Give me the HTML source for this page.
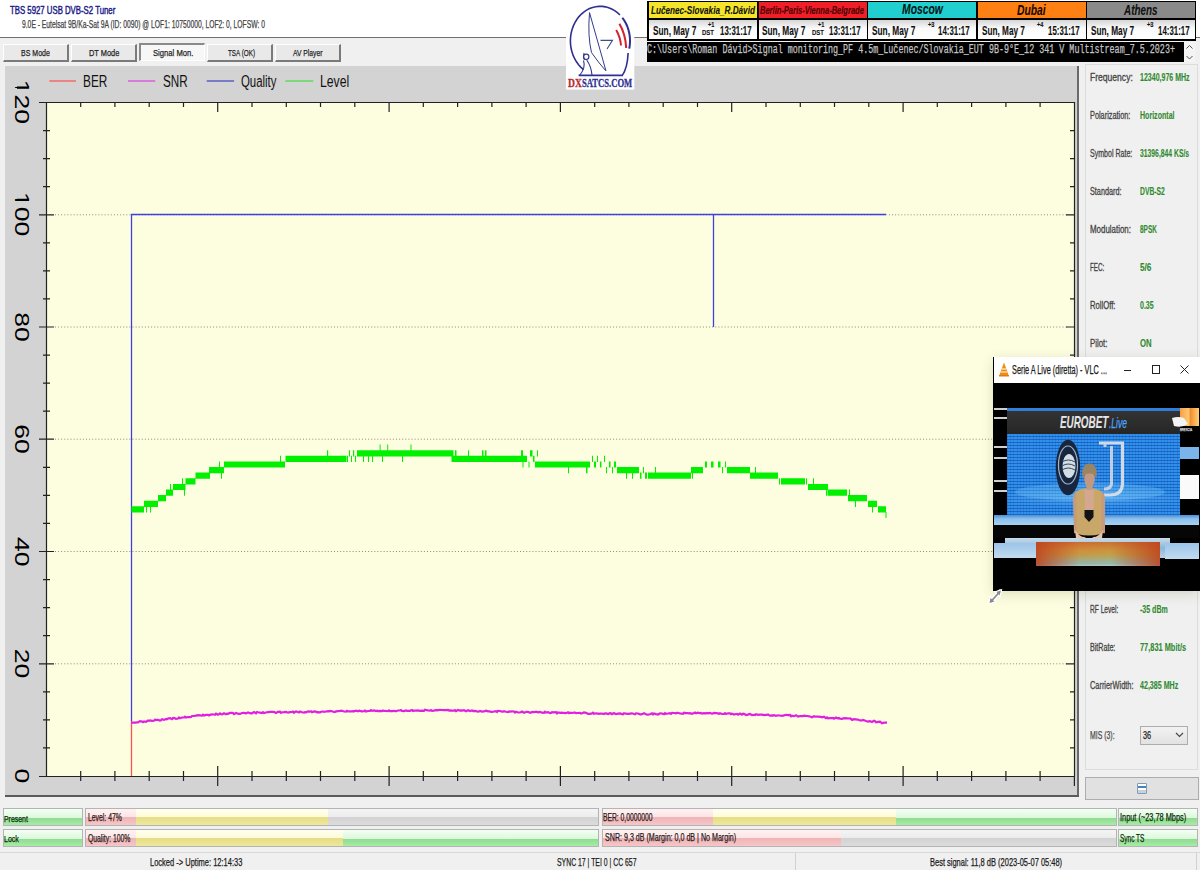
<!DOCTYPE html><html><head><meta charset="utf-8"><style>
*{margin:0;padding:0;box-sizing:border-box}
html,body{width:1200px;height:870px;overflow:hidden;background:#f0f0f0;font-family:"Liberation Sans",sans-serif}
body{position:relative}
.a{position:absolute}
.t{position:absolute;white-space:nowrap;transform-origin:0 0}
</style></head><body>
<div class="a" style="left:0px;top:0px;width:1200px;height:37px;background:#fff;"></div>
<div class="a" style="left:0px;top:37px;width:1200px;height:1px;background:#707070;"></div>
<div class="t" style="left:10.34px;top:4.72px;font-size:10.72px;line-height:10.72px;color:#1c1c86;font-family:'Liberation Sans',sans-serif;transform:scaleX(0.7268);-webkit-text-stroke:0.45px #1c1c86;">TBS 5927 USB DVB-S2 Tuner</div>
<div class="t" style="left:22.36px;top:20.23px;font-size:10.00px;line-height:10.00px;color:#454545;font-family:'Liberation Sans',sans-serif;transform:scaleX(0.6744);-webkit-text-stroke:0.25px #454545;">9.0E - Eutelsat 9B/Ka-Sat 9A (ID: 0090) @ LOF1: 10750000, LOF2: 0, LOFSW: 0</div>
<div class="a" style="left:3px;top:44px;width:66px;height:18px;background:#e9e9e9;border-top:1px solid #fff;border-left:1px solid #fff;border-right:2px solid #7a7a7a;border-bottom:2px solid #7a7a7a"></div>
<div class="t" style="left:21.44px;top:47.98px;font-size:9.71px;line-height:9.71px;color:#1e1e1e;font-family:'Liberation Sans',sans-serif;transform:scaleX(0.7227);-webkit-text-stroke:0.25px #1e1e1e;">BS Mode</div>
<div class="a" style="left:71px;top:44px;width:66px;height:18px;background:#e9e9e9;border-top:1px solid #fff;border-left:1px solid #fff;border-right:2px solid #7a7a7a;border-bottom:2px solid #7a7a7a"></div>
<div class="t" style="left:88.71px;top:47.98px;font-size:9.71px;line-height:9.71px;color:#1e1e1e;font-family:'Liberation Sans',sans-serif;transform:scaleX(0.7627);-webkit-text-stroke:0.25px #1e1e1e;">DT Mode</div>
<div class="a" style="left:139px;top:43px;width:66px;height:18px;background:#f7f7f7;border-top:2px solid #8a8a8a;border-left:2px solid #8a8a8a;border-right:1px solid #fff;border-bottom:1px solid #fff"></div>
<div class="t" style="left:152.62px;top:47.98px;font-size:9.71px;line-height:9.71px;color:#1e1e1e;font-family:'Liberation Sans',sans-serif;transform:scaleX(0.7894);-webkit-text-stroke:0.25px #1e1e1e;">Signal Mon.</div>
<div class="a" style="left:207px;top:44px;width:66px;height:18px;background:#e9e9e9;border-top:1px solid #fff;border-left:1px solid #fff;border-right:2px solid #7a7a7a;border-bottom:2px solid #7a7a7a"></div>
<div class="t" style="left:228.07px;top:47.98px;font-size:9.71px;line-height:9.71px;color:#1e1e1e;font-family:'Liberation Sans',sans-serif;transform:scaleX(0.6522);-webkit-text-stroke:0.25px #1e1e1e;">TSA (OK)</div>
<div class="a" style="left:275px;top:44px;width:66px;height:18px;background:#e9e9e9;border-top:1px solid #fff;border-left:1px solid #fff;border-right:2px solid #7a7a7a;border-bottom:2px solid #7a7a7a"></div>
<div class="t" style="left:293.30px;top:47.98px;font-size:9.71px;line-height:9.71px;color:#1e1e1e;font-family:'Liberation Sans',sans-serif;transform:scaleX(0.6944);-webkit-text-stroke:0.25px #1e1e1e;">AV Player</div>
<div class="a" style="left:5px;top:66px;width:1072px;height:731px;background:#d3d3d3;"></div>
<div class="a" style="left:1077px;top:66px;width:2px;height:731px;background:#6a6a6a;"></div>
<div class="a" style="left:5px;top:795px;width:1074px;height:2px;background:#5a5a5a;"></div>
<div class="a" style="left:46px;top:102px;width:1029px;height:674px;background:#fdfee0;"></div>
<svg class="a" style="left:0;top:0" width="1200" height="870" viewBox="0 0 1200 870"><line x1="55" y1="663.8" x2="1067" y2="663.8" stroke="#8c8c78" stroke-width="1" stroke-dasharray="1 2.1"/><line x1="55" y1="551.5" x2="1067" y2="551.5" stroke="#8c8c78" stroke-width="1" stroke-dasharray="1 2.1"/><line x1="55" y1="439.2" x2="1067" y2="439.2" stroke="#8c8c78" stroke-width="1" stroke-dasharray="1 2.1"/><line x1="55" y1="327.0" x2="1067" y2="327.0" stroke="#8c8c78" stroke-width="1" stroke-dasharray="1 2.1"/><line x1="55" y1="214.8" x2="1067" y2="214.8" stroke="#8c8c78" stroke-width="1" stroke-dasharray="1 2.1"/><path d="M46.5 102V776.5M39 102.5H1075M39 776.5H1075M1074.5 102V776.5" stroke="#222" stroke-width="1.2" fill="none"/><path d="M43 747.9H50M1070 747.9H1074.5M43 719.9H50M1070 719.9H1074.5M43 691.8H50M1070 691.8H1074.5M39 663.8H54M1066 663.8H1074.5M43 635.7H50M1070 635.7H1074.5M43 607.6H50M1070 607.6H1074.5M43 579.6H50M1070 579.6H1074.5M39 551.5H54M1066 551.5H1074.5M43 523.4H50M1070 523.4H1074.5M43 495.4H50M1070 495.4H1074.5M43 467.3H50M1070 467.3H1074.5M39 439.2H54M1066 439.2H1074.5M43 411.2H50M1070 411.2H1074.5M43 383.1H50M1070 383.1H1074.5M43 355.1H50M1070 355.1H1074.5M39 327.0H54M1066 327.0H1074.5M43 298.9H50M1070 298.9H1074.5M43 270.9H50M1070 270.9H1074.5M43 242.8H50M1070 242.8H1074.5M39 214.8H54M1066 214.8H1074.5M43 186.7H50M1070 186.7H1074.5M43 158.6H50M1070 158.6H1074.5M43 130.6H50M1070 130.6H1074.5M80.7 771V781M80.7 102V107M114.9 771V781M114.9 102V107M149.2 771V781M149.2 102V107M183.5 771V781M183.5 102V107M217.7 766V786M217.7 102V112M252.0 771V781M252.0 102V107M286.3 771V781M286.3 102V107M320.5 771V781M320.5 102V107M354.8 771V781M354.8 102V107M389.1 766V786M389.1 102V112M423.3 771V781M423.3 102V107M457.6 771V781M457.6 102V107M491.9 771V781M491.9 102V107M526.1 771V781M526.1 102V107M560.4 766V786M560.4 102V112M594.7 771V781M594.7 102V107M628.9 771V781M628.9 102V107M663.2 771V781M663.2 102V107M697.5 771V781M697.5 102V107M731.7 766V786M731.7 102V112M766.0 771V781M766.0 102V107M800.3 771V781M800.3 102V107M834.5 771V781M834.5 102V107M868.8 771V781M868.8 102V107M903.1 766V786M903.1 102V112M937.3 771V781M937.3 102V107M971.6 771V781M971.6 102V107M1005.9 771V781M1005.9 102V107M1040.1 771V781M1040.1 102V107M1074.4 776V786" stroke="#222" stroke-width="1.2" fill="none"/><path d="M131.5 776V720.5" stroke="#ff5050" stroke-width="1.3"/><path d="M131.5 721V214.5H886M713.5 214.5V327" stroke="#4040e0" stroke-width="1.3" fill="none"/><path d="M131 722.7 L132 722.7 L134 722.7 L136 722.7 L137 722.3 L138 722.4 L140 721.1 L142 721.5 L143 722.1 L144 721.5 L146 721.8 L148 720.5 L149 720.9 L150 720.5 L152 720.8 L154 720.7 L155 719.7 L156 719.9 L158 719.9 L160 720.6 L161 720.3 L162 719.2 L164 719.9 L166 718.9 L167 719.3 L168 718.5 L170 718.1 L172 719.2 L173 718.1 L174 717.9 L176 718.8 L178 718.5 L179 717.5 L180 718.3 L182 717.5 L184 717.5 L185 716.7 L186 717.5 L188 717.0 L190 717.2 L191 717.0 L192 716.0 L194 716.0 L196 715.6 L197 715.4 L198 715.2 L200 715.4 L202 715.7 L203 714.7 L204 715.5 L206 714.9 L208 714.8 L209 715.4 L210 714.8 L212 714.4 L214 714.5 L215 714.7 L216 713.7 L218 714.8 L220 713.4 L221 714.3 L222 714.4 L224 713.2 L226 714.2 L227 713.6 L228 713.8 L230 712.9 L232 712.9 L233 713.1 L234 714.1 L236 713.0 L238 713.7 L239 713.9 L240 713.9 L242 713.0 L244 712.9 L245 713.1 L246 713.4 L248 712.4 L250 713.2 L251 713.3 L252 713.3 L254 712.1 L256 713.3 L257 712.0 L258 712.3 L260 712.7 L262 713.1 L263 712.2 L264 713.0 L266 712.5 L268 712.1 L269 712.1 L270 711.9 L272 711.8 L274 711.8 L275 712.6 L276 713.0 L278 711.8 L280 711.6 L281 712.9 L282 712.3 L284 712.1 L286 711.8 L287 712.3 L288 712.6 L290 712.1 L292 712.0 L293 711.5 L294 712.7 L296 711.4 L298 712.0 L299 712.5 L300 711.5 L302 712.3 L304 712.6 L305 712.1 L306 712.3 L308 711.3 L310 711.7 L311 711.3 L312 712.2 L314 711.4 L316 711.6 L317 712.4 L318 712.1 L320 712.3 L322 711.5 L323 711.5 L324 711.8 L326 711.5 L328 711.2 L329 711.3 L330 710.9 L332 711.2 L334 712.0 L335 711.9 L336 711.4 L338 711.2 L340 711.0 L341 710.6 L342 710.8 L344 711.5 L346 711.6 L347 710.9 L348 711.4 L350 711.4 L352 711.3 L353 711.2 L354 711.3 L356 710.7 L358 711.2 L359 710.6 L360 710.9 L362 711.3 L364 711.1 L365 710.6 L366 711.5 L368 711.0 L370 710.9 L371 710.1 L372 710.8 L374 710.4 L376 711.0 L377 710.7 L378 711.2 L380 710.9 L382 711.1 L383 710.5 L384 710.9 L386 711.0 L388 711.1 L389 710.4 L390 711.1 L392 711.1 L394 710.8 L395 711.2 L396 711.2 L398 710.5 L400 710.5 L401 710.0 L402 711.0 L404 711.1 L406 710.5 L407 710.8 L408 710.8 L410 710.8 L412 710.0 L413 710.9 L414 710.6 L416 710.7 L418 710.4 L419 710.7 L420 710.9 L422 710.7 L424 710.8 L425 709.8 L426 710.0 L428 710.4 L430 710.7 L431 710.1 L432 710.8 L434 710.7 L436 709.9 L437 710.5 L438 710.1 L440 709.9 L442 710.0 L443 710.2 L444 710.1 L446 710.1 L448 709.8 L449 710.5 L450 710.3 L452 710.7 L454 710.7 L455 710.2 L456 711.2 L458 710.0 L460 710.6 L461 710.4 L462 710.6 L464 710.2 L466 711.3 L467 710.7 L468 710.2 L470 711.1 L472 710.4 L473 711.0 L474 710.8 L476 711.1 L478 711.7 L479 711.5 L480 711.0 L482 711.6 L484 711.4 L485 711.0 L486 710.7 L488 711.4 L490 711.4 L491 712.0 L492 712.0 L494 711.5 L496 711.2 L497 712.0 L498 710.8 L500 711.0 L502 711.6 L503 711.7 L504 711.1 L506 711.8 L508 712.2 L509 711.5 L510 711.6 L512 711.4 L514 711.5 L515 712.5 L516 711.7 L518 712.5 L520 712.5 L521 712.1 L522 711.6 L524 712.7 L526 712.0 L527 711.9 L528 711.8 L530 712.8 L532 712.1 L533 711.9 L534 712.2 L536 711.7 L538 712.4 L539 712.2 L540 712.0 L542 712.7 L544 712.8 L545 711.7 L546 712.5 L548 712.1 L550 713.1 L551 712.9 L552 712.2 L554 712.3 L556 712.1 L557 713.3 L558 712.4 L560 712.9 L562 712.7 L563 713.0 L564 712.9 L566 713.2 L568 712.3 L569 713.2 L570 712.6 L572 713.0 L574 712.7 L575 712.7 L576 713.1 L578 713.0 L580 712.9 L581 713.5 L582 713.3 L584 712.5 L586 712.9 L587 713.2 L588 713.9 L590 713.8 L592 713.4 L593 712.7 L594 713.8 L596 713.3 L598 713.6 L599 713.8 L600 713.7 L602 713.5 L604 714.1 L605 713.4 L606 713.4 L608 714.1 L610 713.2 L611 713.3 L612 714.1 L614 713.0 L616 714.1 L617 713.9 L618 713.6 L620 713.4 L622 714.1 L623 714.3 L624 713.2 L626 713.7 L628 713.8 L629 713.8 L630 713.6 L632 713.3 L634 714.0 L635 714.3 L636 713.3 L638 713.5 L640 714.3 L641 714.3 L642 714.2 L644 713.3 L646 714.3 L647 714.6 L648 714.7 L650 714.3 L652 713.3 L653 714.4 L654 713.5 L656 714.1 L658 714.5 L659 714.1 L660 713.3 L662 713.5 L664 714.3 L665 713.2 L666 713.8 L668 713.5 L670 713.1 L671 713.8 L672 712.9 L674 713.0 L676 713.3 L677 712.9 L678 712.8 L680 713.5 L682 713.7 L683 713.9 L684 712.8 L686 713.2 L688 713.0 L689 713.4 L690 713.2 L692 713.8 L694 713.0 L695 712.5 L696 713.3 L698 712.6 L700 713.2 L701 713.0 L702 713.6 L704 713.2 L706 713.3 L707 712.9 L708 713.3 L710 713.0 L712 713.7 L713 713.4 L714 712.9 L716 713.1 L718 713.3 L719 713.9 L720 713.2 L722 714.0 L724 713.9 L725 713.2 L726 714.0 L728 713.3 L730 713.4 L731 714.1 L732 713.6 L734 714.5 L736 714.0 L737 713.9 L738 714.6 L740 713.5 L742 714.6 L743 713.7 L744 713.8 L746 715.0 L748 714.7 L749 714.1 L750 714.0 L752 715.2 L754 714.8 L755 715.1 L756 714.2 L758 714.9 L760 714.6 L761 714.5 L762 714.6 L764 715.1 L766 714.8 L767 714.9 L768 714.5 L770 715.6 L772 715.4 L773 715.6 L774 715.1 L776 715.8 L778 715.3 L779 715.5 L780 715.5 L782 715.8 L784 715.4 L785 715.0 L786 714.9 L788 715.2 L790 715.0 L791 716.3 L792 715.7 L794 716.2 L796 715.2 L797 715.9 L798 716.5 L800 716.2 L802 716.0 L803 716.1 L804 715.7 L806 715.9 L808 716.0 L809 716.4 L810 716.5 L812 717.3 L814 716.3 L815 716.6 L816 716.7 L818 716.6 L820 716.9 L821 716.9 L822 717.3 L824 716.8 L826 718.1 L827 717.4 L828 718.3 L830 718.1 L832 718.1 L833 717.9 L834 718.7 L836 717.6 L838 718.5 L839 718.0 L840 718.7 L842 718.8 L844 718.1 L845 718.3 L846 718.1 L848 718.5 L850 718.4 L851 719.0 L852 719.9 L854 719.2 L856 719.3 L857 719.7 L858 719.6 L860 720.4 L862 720.5 L863 719.9 L864 720.2 L866 721.0 L868 721.5 L869 721.3 L870 721.1 L872 722.0 L874 720.8 L875 721.1 L876 722.3 L878 721.9 L880 721.6 L881 722.4 L882 723.2 L884 722.7 L886 722.6 L887 722.4" stroke="#e020e0" stroke-width="2.2" fill="none"/><path d="M131.5 506.3H144.0V512.5H131.5z M144.0 500.7H158.0V506.9H144.0z M158.0 495.1H166.0V501.3H158.0z M166.0 489.5H173.0V495.7H166.0z M173.0 483.9H185.5V490.1H173.0z M185.5 478.2H195.5V484.5H185.5z M195.5 472.6H210.0V478.8H195.5z M210.0 467.0H224.0V473.2H210.0z M224.0 461.4H285.0V467.6H224.0z M285.5 455.8H346.5V462.0H285.5z M358.0 450.2H451.5V456.4H358.0z M451.5 455.8H527.0V462.0H451.5z M535.0 461.4H590.0V467.6H535.0z M617.0 467.0H638.0V473.2H617.0z M648.0 472.6H691.0V478.8H648.0z M691.0 467.0H703.0V473.2H691.0z M727.0 467.0H750.0V473.2H727.0z M750.0 472.6H778.0V478.8H750.0z M782.0 478.2H805.0V484.5H782.0z M809.0 483.9H828.0V490.1H809.0z M828.0 489.5H847.0V495.7H828.0z M848.0 495.1H866.0V501.3H848.0z M868.0 500.7H877.0V506.9H868.0z M878.0 506.3H886.0V512.5H878.0z M144.5 500.7h1V506.9h-1z M146.0 506.3h1V512.5h-1z M150.0 506.3h1V512.5h-1z M155.5 500.7h1.5V506.9h-1.5z M170.0 483.9h1V490.1h-1z M182.0 478.2h1V484.5h-1z M184.0 489.5h1V495.7h-1z M203.0 472.6h1V478.8h-1z M209.0 467.0h1V473.2h-1z M219.0 461.4h1V467.6h-1z M221.0 472.6h1V478.8h-1z M231.0 461.4h1V467.6h-1z M280.0 455.8h1V462.0h-1z M283.0 461.4h2V467.6h-2z M327.0 450.2h1.2V456.4h-1.2z M347.0 455.8h1V462.0h-1z M349.0 450.2h1V456.4h-1z M351.0 455.8h1V462.0h-1z M353.0 450.2h1.2V456.4h-1.2z M355.0 455.8h1V462.0h-1z M357.0 450.2h1V456.4h-1z M363.0 455.8h1V462.0h-1z M366.0 450.2h1V456.4h-1z M368.0 455.8h1V462.0h-1z M372.0 455.8h1V462.0h-1z M374.0 450.2h1V456.4h-1z M379.6 444.6h1V450.8h-1z M382.0 455.8h1V462.0h-1z M387.2 444.6h1V450.8h-1z M402.0 455.8h1V462.0h-1z M410.5 444.6h1V450.8h-1z M451.5 450.2h2V456.4h-2z M455.0 450.2h1.5V456.4h-1.5z M468.0 450.2h1V456.4h-1z M482.0 450.2h1.5V456.4h-1.5z M485.0 450.2h1.5V456.4h-1.5z M522.5 461.4h1V467.6h-1z M528.5 461.4h1V467.6h-1z M521.0 450.2h2V456.4h-2z M524.0 455.8h1V462.0h-1z M530.0 450.2h2.5V456.4h-2.5z M533.0 455.8h1.5V462.0h-1.5z M537.0 450.2h1V456.4h-1z M568.0 467.0h1V473.2h-1z M586.0 467.0h1.5V473.2h-1.5z M589.0 461.4h1V467.6h-1z M592.0 455.8h1V462.0h-1z M594.0 461.4h2V467.6h-2z M597.0 455.8h1V462.0h-1z M600.0 461.4h1.5V467.6h-1.5z M604.0 455.8h1V462.0h-1z M606.0 467.0h1V473.2h-1z M609.0 461.4h1.5V467.6h-1.5z M612.0 467.0h1V473.2h-1z M614.0 461.4h2V467.6h-2z M619.0 467.0h1V473.2h-1z M626.0 472.6h1V478.8h-1z M632.0 472.6h1V478.8h-1z M638.0 467.0h1V473.2h-1z M640.0 472.6h1.5V478.8h-1.5z M643.0 467.0h1V473.2h-1z M645.0 472.6h2V478.8h-2z M655.0 467.0h1V473.2h-1z M661.0 472.6h1V478.8h-1z M687.0 472.6h1V478.8h-1z M692.0 472.6h1V478.8h-1z M697.0 467.0h1V473.2h-1z M705.0 461.4h2V467.6h-2z M711.0 461.4h2.5V467.6h-2.5z M718.0 461.4h2.5V467.6h-2.5z M725.0 461.4h1V467.6h-1z M727.0 467.0h1V473.2h-1z M722.0 467.0h1V473.2h-1z M755.0 467.0h1V473.2h-1z M779.0 478.2h1V484.5h-1z M781.0 478.2h1V484.5h-1z M806.0 478.2h1V484.5h-1z M808.0 483.9h1V490.1h-1z M813.0 478.2h1V484.5h-1z M826.0 489.5h1.5V495.7h-1.5z M841.0 489.5h1V495.7h-1z M849.0 489.5h1V495.7h-1z M855.0 500.7h1V506.9h-1z M866.0 495.1h1V501.3h-1z M872.0 506.3h1V512.5h-1z M881.0 506.3h1V512.5h-1z M885.5 511.9h1V518.1h-1z" fill="#00f000"/><line x1="49.3" y1="81" x2="76" y2="81" stroke="#ff5050" stroke-width="1.2"/><line x1="128" y1="81" x2="155.2" y2="81" stroke="#e040e0" stroke-width="1.2"/><line x1="206.7" y1="81" x2="234.1" y2="81" stroke="#4040c0" stroke-width="1.2"/><line x1="285.3" y1="81" x2="313.3" y2="81" stroke="#40e040" stroke-width="1.2"/></svg>
<div class="t" style="left:83.05px;top:73.71px;font-size:15.94px;line-height:15.94px;color:#111;font-family:'Liberation Sans',sans-serif;transform:scaleX(0.7416);">BER</div>
<div class="t" style="left:162.62px;top:73.71px;font-size:15.94px;line-height:15.94px;color:#111;font-family:'Liberation Sans',sans-serif;transform:scaleX(0.7334);">SNR</div>
<div class="t" style="left:241.33px;top:73.71px;font-size:15.94px;line-height:15.94px;color:#111;font-family:'Liberation Sans',sans-serif;transform:scaleX(0.7154);">Quality</div>
<div class="t" style="left:320.32px;top:73.71px;font-size:15.94px;line-height:15.94px;color:#111;font-family:'Liberation Sans',sans-serif;transform:scaleX(0.7667);">Level</div>
<div class="t" style="left:0;top:0;font-size:26.5px;line-height:26.5px;color:#000;transform:translate(31.31px,768.58px) rotate(90deg) scaleY(0.7492)">0</div>
<div class="t" style="left:0;top:0;font-size:26.5px;line-height:26.5px;color:#000;transform:translate(31.31px,648.78px) rotate(90deg) scaleY(0.7492)">20</div>
<div class="t" style="left:0;top:0;font-size:26.5px;line-height:26.5px;color:#000;transform:translate(31.31px,536.93px) rotate(90deg) scaleY(0.7492)">40</div>
<div class="t" style="left:0;top:0;font-size:26.5px;line-height:26.5px;color:#000;transform:translate(31.31px,424.28px) rotate(90deg) scaleY(0.7492)">60</div>
<div class="t" style="left:0;top:0;font-size:26.5px;line-height:26.5px;color:#000;transform:translate(31.31px,312.16px) rotate(90deg) scaleY(0.7492)">80</div>
<div class="t" style="left:0;top:0;font-size:26.5px;line-height:26.5px;color:#000;transform:translate(31.31px,192.09px) rotate(90deg) scaleY(0.7492)">100</div>
<div class="t" style="left:0;top:0;font-size:26.5px;line-height:26.5px;color:#000;transform:translate(31.31px,79.84px) rotate(90deg) scaleY(0.7492)">120</div>
<div class="a" style="left:14px;top:192.75px;width:3px;height:6.1px;background:#d3d3d3;"></div>
<div class="a" style="left:14px;top:200.65px;width:3px;height:6.1px;background:#d3d3d3;"></div>
<div class="a" style="left:14px;top:80.5px;width:3px;height:6.1px;background:#d3d3d3;"></div>
<div class="a" style="left:14px;top:88.4px;width:3px;height:6.1px;background:#d3d3d3;"></div>
<div class="a" style="left:1085px;top:64px;width:113px;height:706px;border:1px solid #dcdcdc;background:#f0f0f0"></div>
<div class="t" style="left:1090.11px;top:72.71px;font-size:10.14px;line-height:10.14px;color:#444;font-family:'Liberation Sans',sans-serif;transform:scaleX(0.8449);-webkit-text-stroke:0.3px #444;">Frequency:</div>
<div class="t" style="left:1139.98px;top:72.71px;font-size:10.14px;line-height:10.14px;color:#2f8a2f;font-family:'Liberation Sans',sans-serif;font-weight:bold;transform:scaleX(0.6940);-webkit-text-stroke:0.1px #2f8a2f;">12340,976 MHz</div>
<div class="t" style="left:1090.21px;top:110.71px;font-size:10.14px;line-height:10.14px;color:#444;font-family:'Liberation Sans',sans-serif;transform:scaleX(0.7250);-webkit-text-stroke:0.3px #444;">Polarization:</div>
<div class="t" style="left:1139.90px;top:110.71px;font-size:10.14px;line-height:10.14px;color:#2f8a2f;font-family:'Liberation Sans',sans-serif;font-weight:bold;transform:scaleX(0.6973);-webkit-text-stroke:0.1px #2f8a2f;">Horizontal</div>
<div class="t" style="left:1090.45px;top:148.71px;font-size:10.14px;line-height:10.14px;color:#444;font-family:'Liberation Sans',sans-serif;transform:scaleX(0.6964);-webkit-text-stroke:0.3px #444;">Symbol Rate:</div>
<div class="t" style="left:1140.26px;top:148.71px;font-size:10.14px;line-height:10.14px;color:#2f8a2f;font-family:'Liberation Sans',sans-serif;font-weight:bold;transform:scaleX(0.6709);-webkit-text-stroke:0.1px #2f8a2f;">31396,844 KS/s</div>
<div class="t" style="left:1090.44px;top:186.71px;font-size:10.14px;line-height:10.14px;color:#444;font-family:'Liberation Sans',sans-serif;transform:scaleX(0.7158);-webkit-text-stroke:0.3px #444;">Standard:</div>
<div class="t" style="left:1139.93px;top:186.71px;font-size:10.14px;line-height:10.14px;color:#2f8a2f;font-family:'Liberation Sans',sans-serif;font-weight:bold;transform:scaleX(0.6673);-webkit-text-stroke:0.1px #2f8a2f;">DVB-S2</div>
<div class="t" style="left:1090.16px;top:224.71px;font-size:10.14px;line-height:10.14px;color:#444;font-family:'Liberation Sans',sans-serif;transform:scaleX(0.7827);-webkit-text-stroke:0.3px #444;">Modulation:</div>
<div class="t" style="left:1140.21px;top:224.71px;font-size:10.14px;line-height:10.14px;color:#2f8a2f;font-family:'Liberation Sans',sans-serif;font-weight:bold;transform:scaleX(0.6367);-webkit-text-stroke:0.1px #2f8a2f;">8PSK</div>
<div class="t" style="left:1090.30px;top:262.71px;font-size:10.14px;line-height:10.14px;color:#444;font-family:'Liberation Sans',sans-serif;transform:scaleX(0.6213);-webkit-text-stroke:0.3px #444;">FEC:</div>
<div class="t" style="left:1140.15px;top:262.71px;font-size:10.14px;line-height:10.14px;color:#2f8a2f;font-family:'Liberation Sans',sans-serif;font-weight:bold;transform:scaleX(0.8140);-webkit-text-stroke:0.1px #2f8a2f;">5/6</div>
<div class="t" style="left:1090.19px;top:300.71px;font-size:10.14px;line-height:10.14px;color:#444;font-family:'Liberation Sans',sans-serif;transform:scaleX(0.7573);-webkit-text-stroke:0.3px #444;">RollOff:</div>
<div class="t" style="left:1140.12px;top:300.71px;font-size:10.14px;line-height:10.14px;color:#2f8a2f;font-family:'Liberation Sans',sans-serif;font-weight:bold;transform:scaleX(0.6921);-webkit-text-stroke:0.1px #2f8a2f;">0.35</div>
<div class="t" style="left:1090.17px;top:338.71px;font-size:10.14px;line-height:10.14px;color:#444;font-family:'Liberation Sans',sans-serif;transform:scaleX(0.7704);-webkit-text-stroke:0.3px #444;">Pilot:</div>
<div class="t" style="left:1140.09px;top:338.71px;font-size:10.14px;line-height:10.14px;color:#2f8a2f;font-family:'Liberation Sans',sans-serif;font-weight:bold;transform:scaleX(0.7674);-webkit-text-stroke:0.1px #2f8a2f;">ON</div>
<div class="t" style="left:1090.27px;top:604.71px;font-size:10.14px;line-height:10.14px;color:#444;font-family:'Liberation Sans',sans-serif;transform:scaleX(0.6547);-webkit-text-stroke:0.3px #444;">RF Level:</div>
<div class="t" style="left:1140.12px;top:604.71px;font-size:10.14px;line-height:10.14px;color:#2f8a2f;font-family:'Liberation Sans',sans-serif;font-weight:bold;transform:scaleX(0.6938);-webkit-text-stroke:0.1px #2f8a2f;">-35 dBm</div>
<div class="t" style="left:1090.23px;top:642.71px;font-size:10.14px;line-height:10.14px;color:#444;font-family:'Liberation Sans',sans-serif;transform:scaleX(0.7037);-webkit-text-stroke:0.3px #444;">BitRate:</div>
<div class="t" style="left:1140.10px;top:642.71px;font-size:10.14px;line-height:10.14px;color:#2f8a2f;font-family:'Liberation Sans',sans-serif;font-weight:bold;transform:scaleX(0.7309);-webkit-text-stroke:0.1px #2f8a2f;">77,831 Mbit/s</div>
<div class="t" style="left:1090.43px;top:680.71px;font-size:10.14px;line-height:10.14px;color:#444;font-family:'Liberation Sans',sans-serif;transform:scaleX(0.7286);-webkit-text-stroke:0.3px #444;">CarrierWidth:</div>
<div class="t" style="left:1140.33px;top:680.71px;font-size:10.14px;line-height:10.14px;color:#2f8a2f;font-family:'Liberation Sans',sans-serif;font-weight:bold;transform:scaleX(0.7014);-webkit-text-stroke:0.1px #2f8a2f;">42,385 MHz</div>
<div class="t" style="left:1090.25px;top:730.91px;font-size:10.14px;line-height:10.14px;color:#4a4a4a;font-family:'Liberation Sans',sans-serif;transform:scaleX(0.6833);-webkit-text-stroke:0.25px #4a4a4a;">MIS (3):</div>
<div class="a" style="left:1140px;top:726px;width:48px;height:19px;border:1px solid #adadad;background:linear-gradient(#f2f2f2,#e2e2e2)"></div>
<div class="t" style="left:1143.21px;top:730.71px;font-size:10.14px;line-height:10.14px;color:#222;font-family:'Liberation Sans',sans-serif;transform:scaleX(0.7178);-webkit-text-stroke:0.25px #222;">36</div>
<svg class="a" style="left:1175px;top:732px" width="9" height="6"><path d="M1 1L4.5 4.5L8 1" stroke="#444" stroke-width="1.1" fill="none"/></svg>
<div class="a" style="left:1085px;top:777px;width:114px;height:23px;border:1px solid #adadad;background:#e1e1e1"></div>
<div class="a" style="left:1137px;top:783px;width:10px;height:11px;border:1px solid #8a9ab0;background:linear-gradient(#fff 0,#fff 25%,#3f86c8 25%,#3f86c8 45%,#fff 45%,#fff 65%,#c8d0dc 65%);border-radius:1px"></div>
<svg class="a" style="left:560px;top:0" width="85" height="95" viewBox="0 0 85 95">
<rect x="6" y="37" width="68.3" height="52.6" fill="#fff"/>
<g stroke="#2e3192" fill="none" stroke-width="1.6">
<path d="M23.54 69.58 L20.95 67.31 L18.58 64.72 L16.48 61.84 L14.66 58.72 L13.14 55.39 L11.94 51.88 L11.08 48.24 L10.56 44.52 L10.40 40.75 L10.59 36.98 L11.13 33.26 L12.02 29.64 L13.25 26.14 L14.79 22.82 L16.64 19.72 L18.76 16.86 L21.14 14.30 L23.75 12.05 L26.56 10.14 L29.52 8.60 L32.61 7.44 L35.80 6.68 L39.03 6.33 L42.28 6.38 L45.50 6.85 L48.66 7.72 L51.72 8.99 L54.65 10.64 L57.40 12.64 L59.95 14.99"/><path d="M62.35 17.75 L62.97 18.58 L63.58 19.44 L64.15 20.32 L64.71 21.22 L65.24 22.14 L65.74 23.08 L66.22 24.04 L66.67 25.01 L67.10 26.00 L67.49 27.01 L67.86 28.03 L68.20 29.07 L68.51 30.11 L68.80 31.17 L69.05 32.24 L69.27 33.31 L69.47 34.40 L69.63 35.49 L69.77 36.58 L69.87 37.68 L69.94 38.79 L69.99 39.89 L70.00 41.00 L69.98 42.11 L69.93 43.21 L69.85 44.32 L69.75 45.42 L69.61 46.51 L69.44 47.60 L69.24 48.68" stroke-width="2"/><path d="M68.11 53.02 Q67.5 68 62.3 75.4 H18.6"/>
</g>
<path d="M56.2 30 Q60.5 37.5 61 45.5" stroke="#d2232a" stroke-width="2" fill="none"/>
<path d="M59.4 23.8 Q65.5 34 66.2 48" stroke="#d2232a" stroke-width="2" fill="none"/>
<path d="M29.5 12.6 L46 71 M29.5 12.6 Q27.5 36 31.5 52.5 Q38 62 45.5 70.5" stroke="#343a8c" stroke-width="1" fill="none"/>
<path d="M40.5 40.4 L52.5 40.2 L47 49" stroke="#3b4d8e" stroke-width="1.1" fill="none"/>
<circle cx="26.2" cy="56.8" r="2.7" stroke="#343a8c" stroke-width="1.2" fill="none"/>
<path d="M23.5 60.5 Q26 68 19.5 75.4 M26.8 60 Q31.5 67 32 75.4 M24 53 Q23 57 24.5 60" stroke="#343a8c" stroke-width="1.1" fill="none"/>
</svg>
<div class="t" style="left:568.01px;top:75.65px;font-size:13.44px;line-height:13.44px;color:#b82a30;font-family:'Liberation Serif',serif;font-weight:bold;transform:scaleX(0.7126);-webkit-text-stroke:0.35px #b82a30;">DX</div>
<div class="t" style="left:582.07px;top:75.65px;font-size:13.44px;line-height:13.44px;color:#2e3192;font-family:'Liberation Serif',serif;font-weight:bold;transform:scaleX(0.6398);-webkit-text-stroke:0.35px #2e3192;">SATCS.COM</div>
<div class="a" style="left:647px;top:1px;width:549px;height:40px;background:#000"></div>
<div class="a" style="left:649.0px;top:2.2px;width:108.3px;height:16.3px;background:#f5e52a"></div>
<div class="a" style="left:649.0px;top:19.8px;width:108.3px;height:19.7px;background:linear-gradient(#d6d6d6,#fafafa 45%,#fff)"></div>
<div class="a" style="left:758.5px;top:2.2px;width:108.3px;height:16.3px;background:#f01e28"></div>
<div class="a" style="left:758.5px;top:19.8px;width:108.3px;height:19.7px;background:linear-gradient(#d6d6d6,#fafafa 45%,#fff)"></div>
<div class="a" style="left:868.0px;top:2.2px;width:108.3px;height:16.3px;background:#22cfcf"></div>
<div class="a" style="left:868.0px;top:19.8px;width:108.3px;height:19.7px;background:linear-gradient(#d6d6d6,#fafafa 45%,#fff)"></div>
<div class="a" style="left:977.5px;top:2.2px;width:108.3px;height:16.3px;background:#ff8012"></div>
<div class="a" style="left:977.5px;top:19.8px;width:108.3px;height:19.7px;background:linear-gradient(#d6d6d6,#fafafa 45%,#fff)"></div>
<div class="a" style="left:1087.0px;top:2.2px;width:107.8px;height:16.3px;background:#8a8a8a"></div>
<div class="a" style="left:1087.0px;top:19.8px;width:107.8px;height:19.7px;background:linear-gradient(#d6d6d6,#fafafa 45%,#fff)"></div>
<div class="t" style="left:650.64px;top:4.71px;font-size:11.45px;line-height:11.45px;color:#111;font-family:'Liberation Sans',sans-serif;font-weight:bold;font-style:italic;transform:scaleX(0.7136);-webkit-text-stroke:0.1px #111;">Lučenec-Slovakia_R.Dávid</div>
<div class="t" style="left:760.35px;top:4.64px;font-size:10.58px;line-height:10.58px;color:#4a0000;font-family:'Liberation Sans',sans-serif;font-weight:bold;font-style:italic;transform:scaleX(0.7115);-webkit-text-stroke:0.1px #4a0000;">Berlin-Paris-Vienna-Belgrade</div>
<div class="t" style="left:901.59px;top:2.21px;font-size:14.64px;line-height:14.64px;color:#061818;font-family:'Liberation Sans',sans-serif;font-weight:bold;font-style:italic;transform:scaleX(0.7089);-webkit-text-stroke:0.1px #061818;">Moscow</div>
<div class="t" style="left:1017.09px;top:2.50px;font-size:14.06px;line-height:14.06px;color:#1a0a00;font-family:'Liberation Sans',sans-serif;font-weight:bold;font-style:italic;transform:scaleX(0.7344);-webkit-text-stroke:0.1px #1a0a00;">Dubai</div>
<div class="t" style="left:1124.20px;top:2.50px;font-size:14.06px;line-height:14.06px;color:#111;font-family:'Liberation Sans',sans-serif;font-weight:bold;font-style:italic;transform:scaleX(0.7029);-webkit-text-stroke:0.1px #111;">Athens</div>
<div class="t" style="left:652.75px;top:24.80px;font-size:12.75px;line-height:12.75px;color:#111;font-family:'Liberation Sans',sans-serif;font-weight:bold;transform:scaleX(0.6516);-webkit-text-stroke:0.1px #111;">Sun, May 7</div>
<div class="t" style="left:708.08px;top:20.53px;font-size:8.12px;line-height:8.12px;color:#111;font-family:'Liberation Sans',sans-serif;font-weight:bold;transform:scaleX(0.6909);-webkit-text-stroke:0.1px #111;">+1</div>
<div class="t" style="left:702.38px;top:29.06px;font-size:7.90px;line-height:7.90px;color:#111;font-family:'Liberation Sans',sans-serif;font-weight:bold;transform:scaleX(0.7517);-webkit-text-stroke:0.1px #111;">DST</div>
<div class="t" style="left:719.73px;top:24.80px;font-size:12.75px;line-height:12.75px;color:#111;font-family:'Liberation Sans',sans-serif;font-weight:bold;transform:scaleX(0.6192);-webkit-text-stroke:0.1px #111;">13:31:17</div>
<div class="t" style="left:762.25px;top:24.80px;font-size:12.75px;line-height:12.75px;color:#111;font-family:'Liberation Sans',sans-serif;font-weight:bold;transform:scaleX(0.6501);-webkit-text-stroke:0.1px #111;">Sun, May 7</div>
<div class="t" style="left:817.78px;top:20.53px;font-size:8.12px;line-height:8.12px;color:#111;font-family:'Liberation Sans',sans-serif;font-weight:bold;transform:scaleX(0.6909);-webkit-text-stroke:0.1px #111;">+1</div>
<div class="t" style="left:812.28px;top:29.06px;font-size:7.90px;line-height:7.90px;color:#111;font-family:'Liberation Sans',sans-serif;font-weight:bold;transform:scaleX(0.7517);-webkit-text-stroke:0.1px #111;">DST</div>
<div class="t" style="left:829.03px;top:24.80px;font-size:12.75px;line-height:12.75px;color:#111;font-family:'Liberation Sans',sans-serif;font-weight:bold;transform:scaleX(0.6192);-webkit-text-stroke:0.1px #111;">13:31:17</div>
<div class="t" style="left:872.05px;top:24.80px;font-size:12.75px;line-height:12.75px;color:#111;font-family:'Liberation Sans',sans-serif;font-weight:bold;transform:scaleX(0.6501);-webkit-text-stroke:0.1px #111;">Sun, May 7</div>
<div class="t" style="left:927.77px;top:20.53px;font-size:8.12px;line-height:8.12px;color:#111;font-family:'Liberation Sans',sans-serif;font-weight:bold;transform:scaleX(0.6974);-webkit-text-stroke:0.1px #111;">+3</div>
<div class="t" style="left:938.28px;top:24.80px;font-size:12.75px;line-height:12.75px;color:#111;font-family:'Liberation Sans',sans-serif;font-weight:bold;transform:scaleX(0.6192);-webkit-text-stroke:0.1px #111;">14:31:17</div>
<div class="t" style="left:981.75px;top:24.80px;font-size:12.75px;line-height:12.75px;color:#111;font-family:'Liberation Sans',sans-serif;font-weight:bold;transform:scaleX(0.6433);-webkit-text-stroke:0.1px #111;">Sun, May 7</div>
<div class="t" style="left:1036.78px;top:20.53px;font-size:8.12px;line-height:8.12px;color:#111;font-family:'Liberation Sans',sans-serif;font-weight:bold;transform:scaleX(0.6782);-webkit-text-stroke:0.1px #111;">+4</div>
<div class="t" style="left:1048.28px;top:24.80px;font-size:12.75px;line-height:12.75px;color:#111;font-family:'Liberation Sans',sans-serif;font-weight:bold;transform:scaleX(0.6192);-webkit-text-stroke:0.1px #111;">15:31:17</div>
<div class="t" style="left:1091.00px;top:24.80px;font-size:12.75px;line-height:12.75px;color:#111;font-family:'Liberation Sans',sans-serif;font-weight:bold;transform:scaleX(0.6471);-webkit-text-stroke:0.1px #111;">Sun, May 7</div>
<div class="t" style="left:1146.77px;top:20.53px;font-size:8.12px;line-height:8.12px;color:#111;font-family:'Liberation Sans',sans-serif;font-weight:bold;transform:scaleX(0.6974);-webkit-text-stroke:0.1px #111;">+3</div>
<div class="t" style="left:1157.53px;top:24.80px;font-size:12.75px;line-height:12.75px;color:#111;font-family:'Liberation Sans',sans-serif;font-weight:bold;transform:scaleX(0.6192);-webkit-text-stroke:0.1px #111;">14:31:17</div>
<div class="a" style="left:647px;top:42.2px;width:537px;height:19.6px;background:#000"></div>
<div class="a" style="left:1184px;top:42.2px;width:11px;height:19.6px;background:#f4f4f4"></div>
<svg class="a" style="left:1184px;top:42px" width="11" height="20"><path d="M2.5 6.5L5.5 3.5L8.5 6.5M2.5 14L5.5 17L8.5 14" stroke="#555" stroke-width="1" fill="none"/></svg>
<div class="t" style="left:647.18px;top:44.19px;font-size:12.27px;line-height:12.27px;color:#c4c4c4;font-family:'Liberation Mono',monospace;transform:scaleX(0.6831);-webkit-text-stroke:0.25px #c4c4c4;">C:\Users\Roman Dávid&gt;Signal monitoring_PF 4.5m_Lučenec/Slovakia_EUT 9B-9°E_12 341 V Multistream_7.5.2023+</div>
<div class="a" style="left:3px;top:808px;width:80px;height:18px;border:1px solid #b4b4b4;background:#e6e6e6;overflow:hidden"><div class="a" style="left:0.0px;top:0;width:78.0px;height:16px;background:linear-gradient(#f4fff4 0,#dcf8dc 55%,#90da90 55%,#a6eca6 100%)"></div></div>
<div class="a" style="left:3px;top:829px;width:80px;height:18px;border:1px solid #b4b4b4;background:#e6e6e6;overflow:hidden"><div class="a" style="left:0.0px;top:0;width:78.0px;height:16px;background:linear-gradient(#f4fff4 0,#dcf8dc 55%,#90da90 55%,#a6eca6 100%)"></div></div>
<div class="a" style="left:85px;top:808px;width:514px;height:18px;border:1px solid #b4b4b4;background:#e6e6e6;overflow:hidden"><div class="a" style="left:0.0px;top:0;width:50.0px;height:16px;background:linear-gradient(#fff2f2 0,#fde4e4 50%,#eeb4b6 50%,#f6c6c8 100%)"></div><div class="a" style="left:50.0px;top:0;width:191.5px;height:16px;background:linear-gradient(#fffff0 0,#fdfbd8 50%,#e4dc86 50%,#efe89c 100%)"></div><div class="a" style="left:241.5px;top:0;width:270.5px;height:16px;background:linear-gradient(#f4f4f4 0,#ececec 50%,#d2d2d2 50%,#dcdcdc 100%)"></div></div>
<div class="a" style="left:85px;top:829px;width:514px;height:18px;border:1px solid #b4b4b4;background:#e6e6e6;overflow:hidden"><div class="a" style="left:0.0px;top:0;width:50.0px;height:16px;background:linear-gradient(#fff2f2 0,#fde4e4 50%,#eeb4b6 50%,#f6c6c8 100%)"></div><div class="a" style="left:50.0px;top:0;width:206.5px;height:16px;background:linear-gradient(#fffff0 0,#fdfbd8 50%,#e4dc86 50%,#efe89c 100%)"></div><div class="a" style="left:256.5px;top:0;width:255.5px;height:16px;background:linear-gradient(#f4fff4 0,#dcf8dc 55%,#90da90 55%,#a6eca6 100%)"></div></div>
<div class="a" style="left:602px;top:808px;width:515px;height:18px;border:1px solid #b4b4b4;background:#e6e6e6;overflow:hidden"><div class="a" style="left:0.0px;top:0;width:109.5px;height:16px;background:linear-gradient(#fff2f2 0,#fde4e4 50%,#eeb4b6 50%,#f6c6c8 100%)"></div><div class="a" style="left:109.5px;top:0;width:183.5px;height:16px;background:linear-gradient(#fffff0 0,#fdfbd8 50%,#e4dc86 50%,#efe89c 100%)"></div><div class="a" style="left:293.0px;top:0;width:220.0px;height:16px;background:linear-gradient(#f4fff4 0,#dcf8dc 55%,#90da90 55%,#a6eca6 100%)"></div></div>
<div class="a" style="left:602px;top:829px;width:515px;height:18px;border:1px solid #b4b4b4;background:#e6e6e6;overflow:hidden"><div class="a" style="left:0.0px;top:0;width:238.0px;height:16px;background:linear-gradient(#fff2f2 0,#fde4e4 50%,#eeb4b6 50%,#f6c6c8 100%)"></div><div class="a" style="left:238.0px;top:0;width:275.0px;height:16px;background:linear-gradient(#f4f4f4 0,#ececec 50%,#d2d2d2 50%,#dcdcdc 100%)"></div></div>
<div class="a" style="left:1118px;top:808px;width:80px;height:18px;border:1px solid #b4b4b4;background:#e6e6e6;overflow:hidden"><div class="a" style="left:0.0px;top:0;width:78.0px;height:16px;background:linear-gradient(#f4fff4 0,#dcf8dc 55%,#90da90 55%,#a6eca6 100%)"></div></div>
<div class="a" style="left:1118px;top:829px;width:80px;height:18px;border:1px solid #b4b4b4;background:#e6e6e6;overflow:hidden"><div class="a" style="left:0.0px;top:0;width:78.0px;height:16px;background:linear-gradient(#f4fff4 0,#dcf8dc 55%,#90da90 55%,#a6eca6 100%)"></div></div>
<div class="t" style="left:4.35px;top:813.70px;font-size:9.57px;line-height:9.57px;color:#0c2c0c;font-family:'Liberation Sans',sans-serif;transform:scaleX(0.7250);-webkit-text-stroke:0.25px #0c2c0c;">Present</div>
<div class="t" style="left:4.34px;top:834.30px;font-size:9.57px;line-height:9.57px;color:#0c2c0c;font-family:'Liberation Sans',sans-serif;transform:scaleX(0.7313);-webkit-text-stroke:0.25px #0c2c0c;">Lock</div>
<div class="t" style="left:88.20px;top:812.91px;font-size:10.14px;line-height:10.14px;color:#2a1a1a;font-family:'Liberation Sans',sans-serif;transform:scaleX(0.6755);-webkit-text-stroke:0.25px #2a1a1a;">Level: 47%</div>
<div class="t" style="left:88.41px;top:833.91px;font-size:10.14px;line-height:10.14px;color:#2a1a1a;font-family:'Liberation Sans',sans-serif;transform:scaleX(0.6711);-webkit-text-stroke:0.25px #2a1a1a;">Quality: 100%</div>
<div class="t" style="left:603.21px;top:812.71px;font-size:10.14px;line-height:10.14px;color:#2a1a1a;font-family:'Liberation Sans',sans-serif;transform:scaleX(0.6649);-webkit-text-stroke:0.25px #2a1a1a;">BER: 0,0000000</div>
<div class="t" style="left:605.39px;top:833.21px;font-size:10.14px;line-height:10.14px;color:#2a1a1a;font-family:'Liberation Sans',sans-serif;transform:scaleX(0.7022);-webkit-text-stroke:0.25px #2a1a1a;">SNR: 9,3 dB (Margin: 0,0 dB | No Margin)</div>
<div class="t" style="left:1120.14px;top:813.31px;font-size:10.14px;line-height:10.14px;color:#0c2c0c;font-family:'Liberation Sans',sans-serif;transform:scaleX(0.7276);-webkit-text-stroke:0.25px #0c2c0c;">Input (~23,78 Mbps)</div>
<div class="t" style="left:1120.48px;top:833.51px;font-size:10.14px;line-height:10.14px;color:#0c2c0c;font-family:'Liberation Sans',sans-serif;transform:scaleX(0.6383);-webkit-text-stroke:0.25px #0c2c0c;">Sync TS</div>
<div class="a" style="left:0px;top:852px;width:1200px;height:1px;background:#d9d9d9;"></div>
<div class="a" style="left:795px;top:853px;width:1px;height:17px;background:#d0d0d0;"></div>
<div class="a" style="left:1196px;top:853px;width:1px;height:17px;background:#d0d0d0;"></div>
<div class="t" style="left:149.90px;top:857.10px;font-size:10.87px;line-height:10.87px;color:#1a1a1a;font-family:'Liberation Sans',sans-serif;transform:scaleX(0.6906);-webkit-text-stroke:0.25px #1a1a1a;">Locked -&gt; Uptime: 12:14:33</div>
<div class="t" style="left:556.66px;top:856.69px;font-size:11.59px;line-height:11.59px;color:#1a1a1a;font-family:'Liberation Sans',sans-serif;transform:scaleX(0.5940);-webkit-text-stroke:0.25px #1a1a1a;">SYNC 17 | TEI 0 | CC 657</div>
<div class="t" style="left:929.50px;top:856.90px;font-size:10.87px;line-height:10.87px;color:#1a1a1a;font-family:'Liberation Sans',sans-serif;transform:scaleX(0.6889);-webkit-text-stroke:0.25px #1a1a1a;">Best signal: 11,8 dB (2023-05-07 05:48)</div>
<div class="a" style="left:993px;top:357px;width:207px;height:234px;box-shadow:0 3px 12px rgba(60,60,0,.16)"></div>
<div class="a" style="left:993px;top:357px;width:207px;height:234px;background:#000;overflow:hidden"><div class="a" style="left:1.0px;top:0.0px;width:206.0px;height:26.0px;background:#fff;"></div><div class="a" style="left:1.0px;top:50.6px;width:12.5px;height:2.0px;background:#cfcfcf;"></div><div class="a" style="left:1.0px;top:60.2px;width:12.5px;height:2.0px;background:#cfcfcf;"></div><div class="a" style="left:1.0px;top:89.1px;width:12.5px;height:2.0px;background:#cfcfcf;"></div><div class="a" style="left:1.0px;top:99.5px;width:12.5px;height:2.0px;background:#cfcfcf;"></div><div class="a" style="left:1.0px;top:123.0px;width:12.5px;height:2.0px;background:#cfcfcf;"></div><div class="a" style="left:1.0px;top:133.4px;width:12.5px;height:2.0px;background:#cfcfcf;"></div><div class="a" style="left:13.5px;top:51.0px;width:173.5px;height:3.0px;background:#2f7fd9;"></div><div class="a" style="left:13.5px;top:54.0px;width:173.5px;height:22.5px;background:linear-gradient(#333,#262626);"></div><div class="a" style="left:13.5px;top:76.5px;width:173.5px;height:85.5px;background:repeating-linear-gradient(90deg,rgba(10,60,150,.18) 0,rgba(10,60,150,.18) 1px,rgba(0,0,0,0) 1px,rgba(0,0,0,0) 3.2px),repeating-linear-gradient(#3190ea 0,#3190ea 2px,#1a68c8 2px,#1a68c8 3px);"></div><div class="a" style="left:13.5px;top:76.5px;width:173.5px;height:85.5px;background:radial-gradient(ellipse 60% 12% at 50% 75%,rgba(120,200,255,.45),rgba(0,0,0,0));"></div><div class="a" style="left:1.0px;top:158.0px;width:205.0px;height:10.0px;background:linear-gradient(#4a8fd6,#8cc2ee 40%,#a8d0f0);"></div><div class="a" style="left:1.0px;top:168.0px;width:205.0px;height:12.5px;background:#060606;"></div><div class="a" style="left:12.0px;top:180.5px;width:165.0px;height:20.0px;background:linear-gradient(#c9dcea,#8bb6dc 50%,#b8d2e6);"></div><div class="a" style="left:172.0px;top:185.5px;width:34.0px;height:16.0px;background:linear-gradient(#9cc4ea,#c2dbef);"></div><div class="a" style="left:1.0px;top:185.5px;width:42.0px;height:15.0px;background:linear-gradient(#9cc4ea,#c2dbef);"></div><div class="a" style="left:43.0px;top:184.7px;width:124.0px;height:24.5px;background:linear-gradient(90deg,rgba(190,70,30,.9),rgba(210,150,60,.3) 35%,rgba(200,170,70,.3) 60%,rgba(190,70,30,.9)),linear-gradient(#c85a2a,#d08a3c 35%,#b8a050 55%,#7cc0e0 90%,#a8d8f0);"></div><div class="a" style="left:187.0px;top:51.0px;width:19.0px;height:17.5px;background:linear-gradient(90deg,#f5a04a,#ffc870 45%,#f09030 55%,#ffd07a);"></div><div class="a" style="left:187.0px;top:89.6px;width:19.0px;height:12.0px;background:#7ab4ea;"></div><div class="a" style="left:187.0px;top:118.0px;width:19.0px;height:24.0px;background:#fafafa;"></div><svg class="a" style="left:0;top:0" width="207" height="234" viewBox="993 357 207 234"><path d="M1172 418 Q1178 416 1184 418 L1188 424 Q1182 428 1174 426 Z" fill="#f4f4f4"/><ellipse cx="1090" cy="492" rx="75" ry="9" fill="rgba(140,220,255,.25)"/><ellipse cx="1068" cy="467.5" rx="12.2" ry="27.8" fill="#17253f"/><ellipse cx="1068" cy="465" rx="9.5" ry="19" fill="none" stroke="#9fb6cc" stroke-width="1.2"/><ellipse cx="1069" cy="466" rx="6.5" ry="12" fill="#d4dce4"/><path d="M1062 462 Q1068 458 1075 462 M1062 466 Q1068 462 1075 466 M1062 470 Q1068 466 1075 470" stroke="#33465e" stroke-width="1" fill="none"/><path d="M1099 443 H1122.5 V484 Q1122 495 1110 495 L1104 495" stroke="#d9dee6" stroke-width="3.2" fill="none" opacity=".95"/><path d="M1105 443 V447 M1111.5 446 V484 Q1111 489 1104 489" stroke="#d0d6e0" stroke-width="3" fill="none" opacity=".9"/><path d="M1073 500 Q1073 492 1079 490 L1081 492 L1081 530 Q1078 534 1074 533 Z M1105 500 Q1105 492 1099 490 L1097 492 L1098 530 Q1101 534 1105 533 Z" fill="#c89a7c"/><path d="M1076 493 Q1079 489 1084 488.5 L1094 488.5 Q1099 489 1101.5 493 L1101 534 Q1089 537 1077 534 Z" fill="#c8a768"/><path d="M1084.5 489 L1094 489 L1093.5 512 L1089 521 L1085 512 Z" fill="#d4a88e"/><path d="M1084.5 510 h9 v7 L1089 522 L1084.5 517 Z" fill="#141414"/><path d="M1086.5 486 h6 v4 h-6z" fill="#c49a80"/><ellipse cx="1089.5" cy="479" rx="5.3" ry="8.5" fill="#c29880"/><path d="M1082.5 479 Q1081 463.5 1089.5 463.5 Q1098 463.5 1096.5 479 Q1095 473 1089.5 473.5 Q1084 473 1082.5 479Z" fill="#9a8462"/><path d="M1075 530 Q1080 538 1086 537 L1083 539 L1076 538 Z M1103 530 Q1098 538 1092 537 L1095 539 L1102 538Z" fill="#e6c4ac"/></svg></div>
<svg class="a" style="left:998px;top:361px" width="12" height="16" viewBox="0 0 12 16"><path d="M6 1.5 L10.5 14 H1.5 Z" fill="#f08a12"/><path d="M4 8 H8 M3 11 H9" stroke="#fff" stroke-width="1.2"/><path d="M1 14 H11 V15.5 H1Z" fill="#e07a10"/></svg>
<div class="t" style="left:1011.63px;top:363.77px;font-size:12.32px;line-height:12.32px;color:#1a1a1a;font-family:'Liberation Sans',sans-serif;transform:scaleX(0.5957);-webkit-text-stroke:0.25px #1a1a1a;">Serie A Live (diretta) - VLC ...</div>
<div class="a" style="left:1124px;top:369.5px;width:6.5px;height:1px;background:#222"></div>
<div class="a" style="left:1152px;top:365px;width:7.5px;height:8.5px;border:1px solid #222"></div>
<svg class="a" style="left:1179.5px;top:364.5px" width="9" height="9"><path d="M.5 .5L8.5 8.5M8.5 .5L.5 8.5" stroke="#222" stroke-width="1"/></svg>
<div class="t" style="left:1059.90px;top:414.59px;font-size:16.67px;line-height:16.67px;color:#e6e6e6;font-family:'Liberation Sans',sans-serif;font-weight:bold;font-style:italic;transform:scaleX(0.5927);-webkit-text-stroke:0.1px #e6e6e6;">EUROBET</div>
<div class="t" style="left:1109.16px;top:417.05px;font-size:13.77px;line-height:13.77px;color:#4fa6ff;font-family:'Liberation Sans',sans-serif;font-style:italic;transform:scaleX(0.6159);-webkit-text-stroke:0.25px #4fa6ff;">.Live</div>
<div class="t" style="left:1179.78px;top:428.93px;font-size:3.62px;line-height:3.62px;color:#ddd;font-family:'Liberation Sans',sans-serif;transform:scaleX(0.7702);-webkit-text-stroke:0.25px #ddd;">BRESCIA</div>
<svg class="a" style="left:987px;top:588px" width="16" height="17"><path d="M3.5 14L13 3.5" stroke="#fff" stroke-width="4.2" stroke-linecap="round"/><path d="M2.5 15L3.5 9.5L8 13.5Z M13.8 2.5L9 4L12.5 8Z" fill="#fff" stroke="#fff" stroke-width="2.2"/><path d="M3.5 14L13 3.5" stroke="#8a8a8a" stroke-width="1.8"/><path d="M2.5 15L3.5 10L7.5 13.5Z M13.8 2.5L9.5 4L12.5 7.5Z" fill="#8a8a8a"/></svg>
</body></html>
